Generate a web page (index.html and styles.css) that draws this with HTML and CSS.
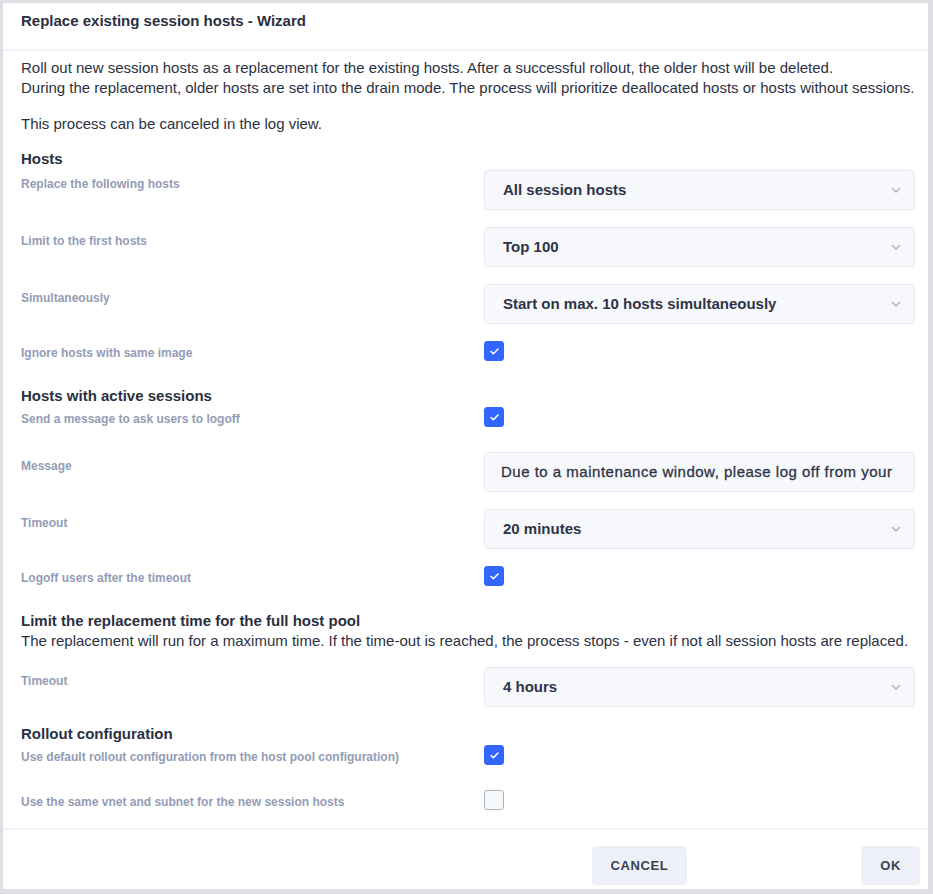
FILE: index.html
```html
<!DOCTYPE html>
<html lang="en">
<head>
<meta charset="utf-8">
<title>Replace existing session hosts - Wizard</title>
<link rel="stylesheet" href="styles.css">
</head>
<body>
<div class="dialog">
  <div class="dlg-header">Replace existing session hosts - Wizard</div>
  <div class="dlg-content">
    <p class="intro">Roll out new session hosts as a replacement for the existing hosts. After a successful rollout, the older host will be deleted.<br>During the replacement, older hosts are set into the drain mode. The process will prioritize deallocated hosts or hosts without sessions.</p>
    <p class="intro second">This process can be canceled in the log view.</p>

    <h3 class="section">Hosts</h3>
    <div class="row row-select">
      <div class="label">Replace the following hosts</div>
      <div class="control"><div class="select"><span>All session hosts</span><svg class="chev" viewBox="0 0 10 6" width="10" height="6"><path d="M1 1l4 4 4-4" fill="none" stroke="#aab1c3" stroke-width="1.3"/></svg></div></div>
    </div>
    <div class="row row-select">
      <div class="label">Limit to the first hosts</div>
      <div class="control"><div class="select"><span>Top 100</span><svg class="chev" viewBox="0 0 10 6" width="10" height="6"><path d="M1 1l4 4 4-4" fill="none" stroke="#aab1c3" stroke-width="1.3"/></svg></div></div>
    </div>
    <div class="row row-select">
      <div class="label">Simultaneously</div>
      <div class="control"><div class="select"><span>Start on max. 10 hosts simultaneously</span><svg class="chev" viewBox="0 0 10 6" width="10" height="6"><path d="M1 1l4 4 4-4" fill="none" stroke="#aab1c3" stroke-width="1.3"/></svg></div></div>
    </div>
    <div class="row row-check">
      <div class="label">Ignore hosts with same image</div>
      <div class="control"><span class="check on"><svg viewBox="0 0 10 8" width="9" height="7"><path d="M1 4l2.7 2.6L9 1.2" fill="none" stroke="#fff" stroke-width="1.8" stroke-linecap="round" stroke-linejoin="round"/></svg></span></div>
    </div>

    <h3 class="section">Hosts with active sessions</h3>
    <div class="row row-check">
      <div class="label">Send a message to ask users to logoff</div>
      <div class="control"><span class="check on"><svg viewBox="0 0 10 8" width="9" height="7"><path d="M1 4l2.7 2.6L9 1.2" fill="none" stroke="#fff" stroke-width="1.8" stroke-linecap="round" stroke-linejoin="round"/></svg></span></div>
    </div>
    <div class="row row-select">
      <div class="label">Message</div>
      <div class="control"><div class="input"><span>Due to a maintenance window, please log off from your</span></div></div>
    </div>
    <div class="row row-select">
      <div class="label">Timeout</div>
      <div class="control"><div class="select"><span>20 minutes</span><svg class="chev" viewBox="0 0 10 6" width="10" height="6"><path d="M1 1l4 4 4-4" fill="none" stroke="#aab1c3" stroke-width="1.3"/></svg></div></div>
    </div>
    <div class="row row-check">
      <div class="label">Logoff users after the timeout</div>
      <div class="control"><span class="check on"><svg viewBox="0 0 10 8" width="9" height="7"><path d="M1 4l2.7 2.6L9 1.2" fill="none" stroke="#fff" stroke-width="1.8" stroke-linecap="round" stroke-linejoin="round"/></svg></span></div>
    </div>

    <h3 class="section">Limit the replacement time for the full host pool</h3>
    <p class="desc">The replacement will run for a maximum time. If the time-out is reached, the process stops - even if not all session hosts are replaced.</p>
    <div class="row row-select">
      <div class="label">Timeout</div>
      <div class="control"><div class="select"><span>4 hours</span><svg class="chev" viewBox="0 0 10 6" width="10" height="6"><path d="M1 1l4 4 4-4" fill="none" stroke="#aab1c3" stroke-width="1.3"/></svg></div></div>
    </div>

    <h3 class="section">Rollout configuration</h3>
    <div class="row row-check">
      <div class="label">Use default rollout configuration from the host pool configuration)</div>
      <div class="control"><span class="check on"><svg viewBox="0 0 10 8" width="9" height="7"><path d="M1 4l2.7 2.6L9 1.2" fill="none" stroke="#fff" stroke-width="1.8" stroke-linecap="round" stroke-linejoin="round"/></svg></span></div>
    </div>
    <div class="row row-check">
      <div class="label">Use the same vnet and subnet for the new session hosts</div>
      <div class="control"><span class="check"></span></div>
    </div>
  </div>
  <div class="dlg-footer">
    <button class="btn">CANCEL</button>
    <button class="btn">OK</button>
  </div>
</div>
</body>
</html>
```
FILE: styles.css
```css
* { box-sizing: border-box; }
html, body { margin: 0; padding: 0; }
body {
  background: #dfe0e5;
  font-family: "Liberation Sans", Arial, sans-serif;
  color: #2b3040;
  width: 933px;
  height: 894px;
  padding: 3px 5px 5px 3px;
}
.dialog {
  background: #fff;
  width: 925px;
  height: 886px;
  display: flex;
  flex-direction: column;
}
.dlg-header {
  height: 48px;
  padding: 9px 18px 0;
  font-size: 15px;
  line-height: 17px;
  font-weight: bold;
  color: #2a3041;
  border-bottom: 2px solid #f1f3f8;
  flex: none;
}
.dlg-content {
  flex: 1;
  overflow: hidden;
  padding: 7px 13px 0 18px;
}
.intro, .desc {
  margin: 0;
  font-size: 15px;
  line-height: 20px;
  color: #2c3142;
}
.intro.second { margin-top: 16px; }
.section {
  margin: 15px 0 0;
  font-size: 15px;
  line-height: 20px;
  font-weight: bold;
  color: #2a3041;
}
.row + .section { margin-top: 0; }
.section + .row { margin-top: 1px; }
.desc + .row { margin-top: 16px; }
.row {
  display: flex;
  align-items: flex-start;
}
.row-select { height: 57px; }
.row-check { height: 45px; }
.label {
  width: 463px;
  flex: none;
  font-size: 12px;
  line-height: 14px;
  font-weight: bold;
  color: #939cb6;
}
.row-select .label { padding-top: 7px; }
.row-check .label { padding-top: 5px; }
.control { flex: 1; }
.select, .input {
  height: 40px;
  background: #f7f8fc;
  border: 1px solid #e6e9f1;
  border-radius: 4px;
  display: flex;
  align-items: center;
  justify-content: space-between;
  padding: 0 13px 2px 18px;
  font-size: 15px;
  font-weight: bold;
  color: #2e3446;
  white-space: nowrap;
  overflow: hidden;
}
.chev { flex: none; margin-top: 2px; }
.input {
  padding-left: 16px;
  font-weight: normal;
  letter-spacing: 0.5px;
  color: #2e3446;
  -webkit-text-stroke: 0.3px #2e3446;
}
.check {
  display: flex;
  align-items: center;
  justify-content: center;
  width: 20px;
  height: 20px;
  border-radius: 3px;
  border: 1px solid #a9b1c6;
  background: #f7f8fb;
}
.check.on {
  background: #3366ff;
  border-color: #3366ff;
}
.dlg-footer {
  flex: none;
  height: 61px;
  border-top: 2px solid #f1f3f8;
  padding: 16px 8px 0 0;
  display: flex;
  justify-content: flex-end;
  align-items: flex-start;
  gap: 174px;
}
.btn {
  height: 39px;
  border: none;
  border-radius: 4px;
  background: #eef0f7;
  font-family: "Liberation Sans", Arial, sans-serif;
  font-size: 13px;
  font-weight: bold;
  letter-spacing: 0.6px;
  color: #3a4052;
  padding: 0 19px;
}
```
